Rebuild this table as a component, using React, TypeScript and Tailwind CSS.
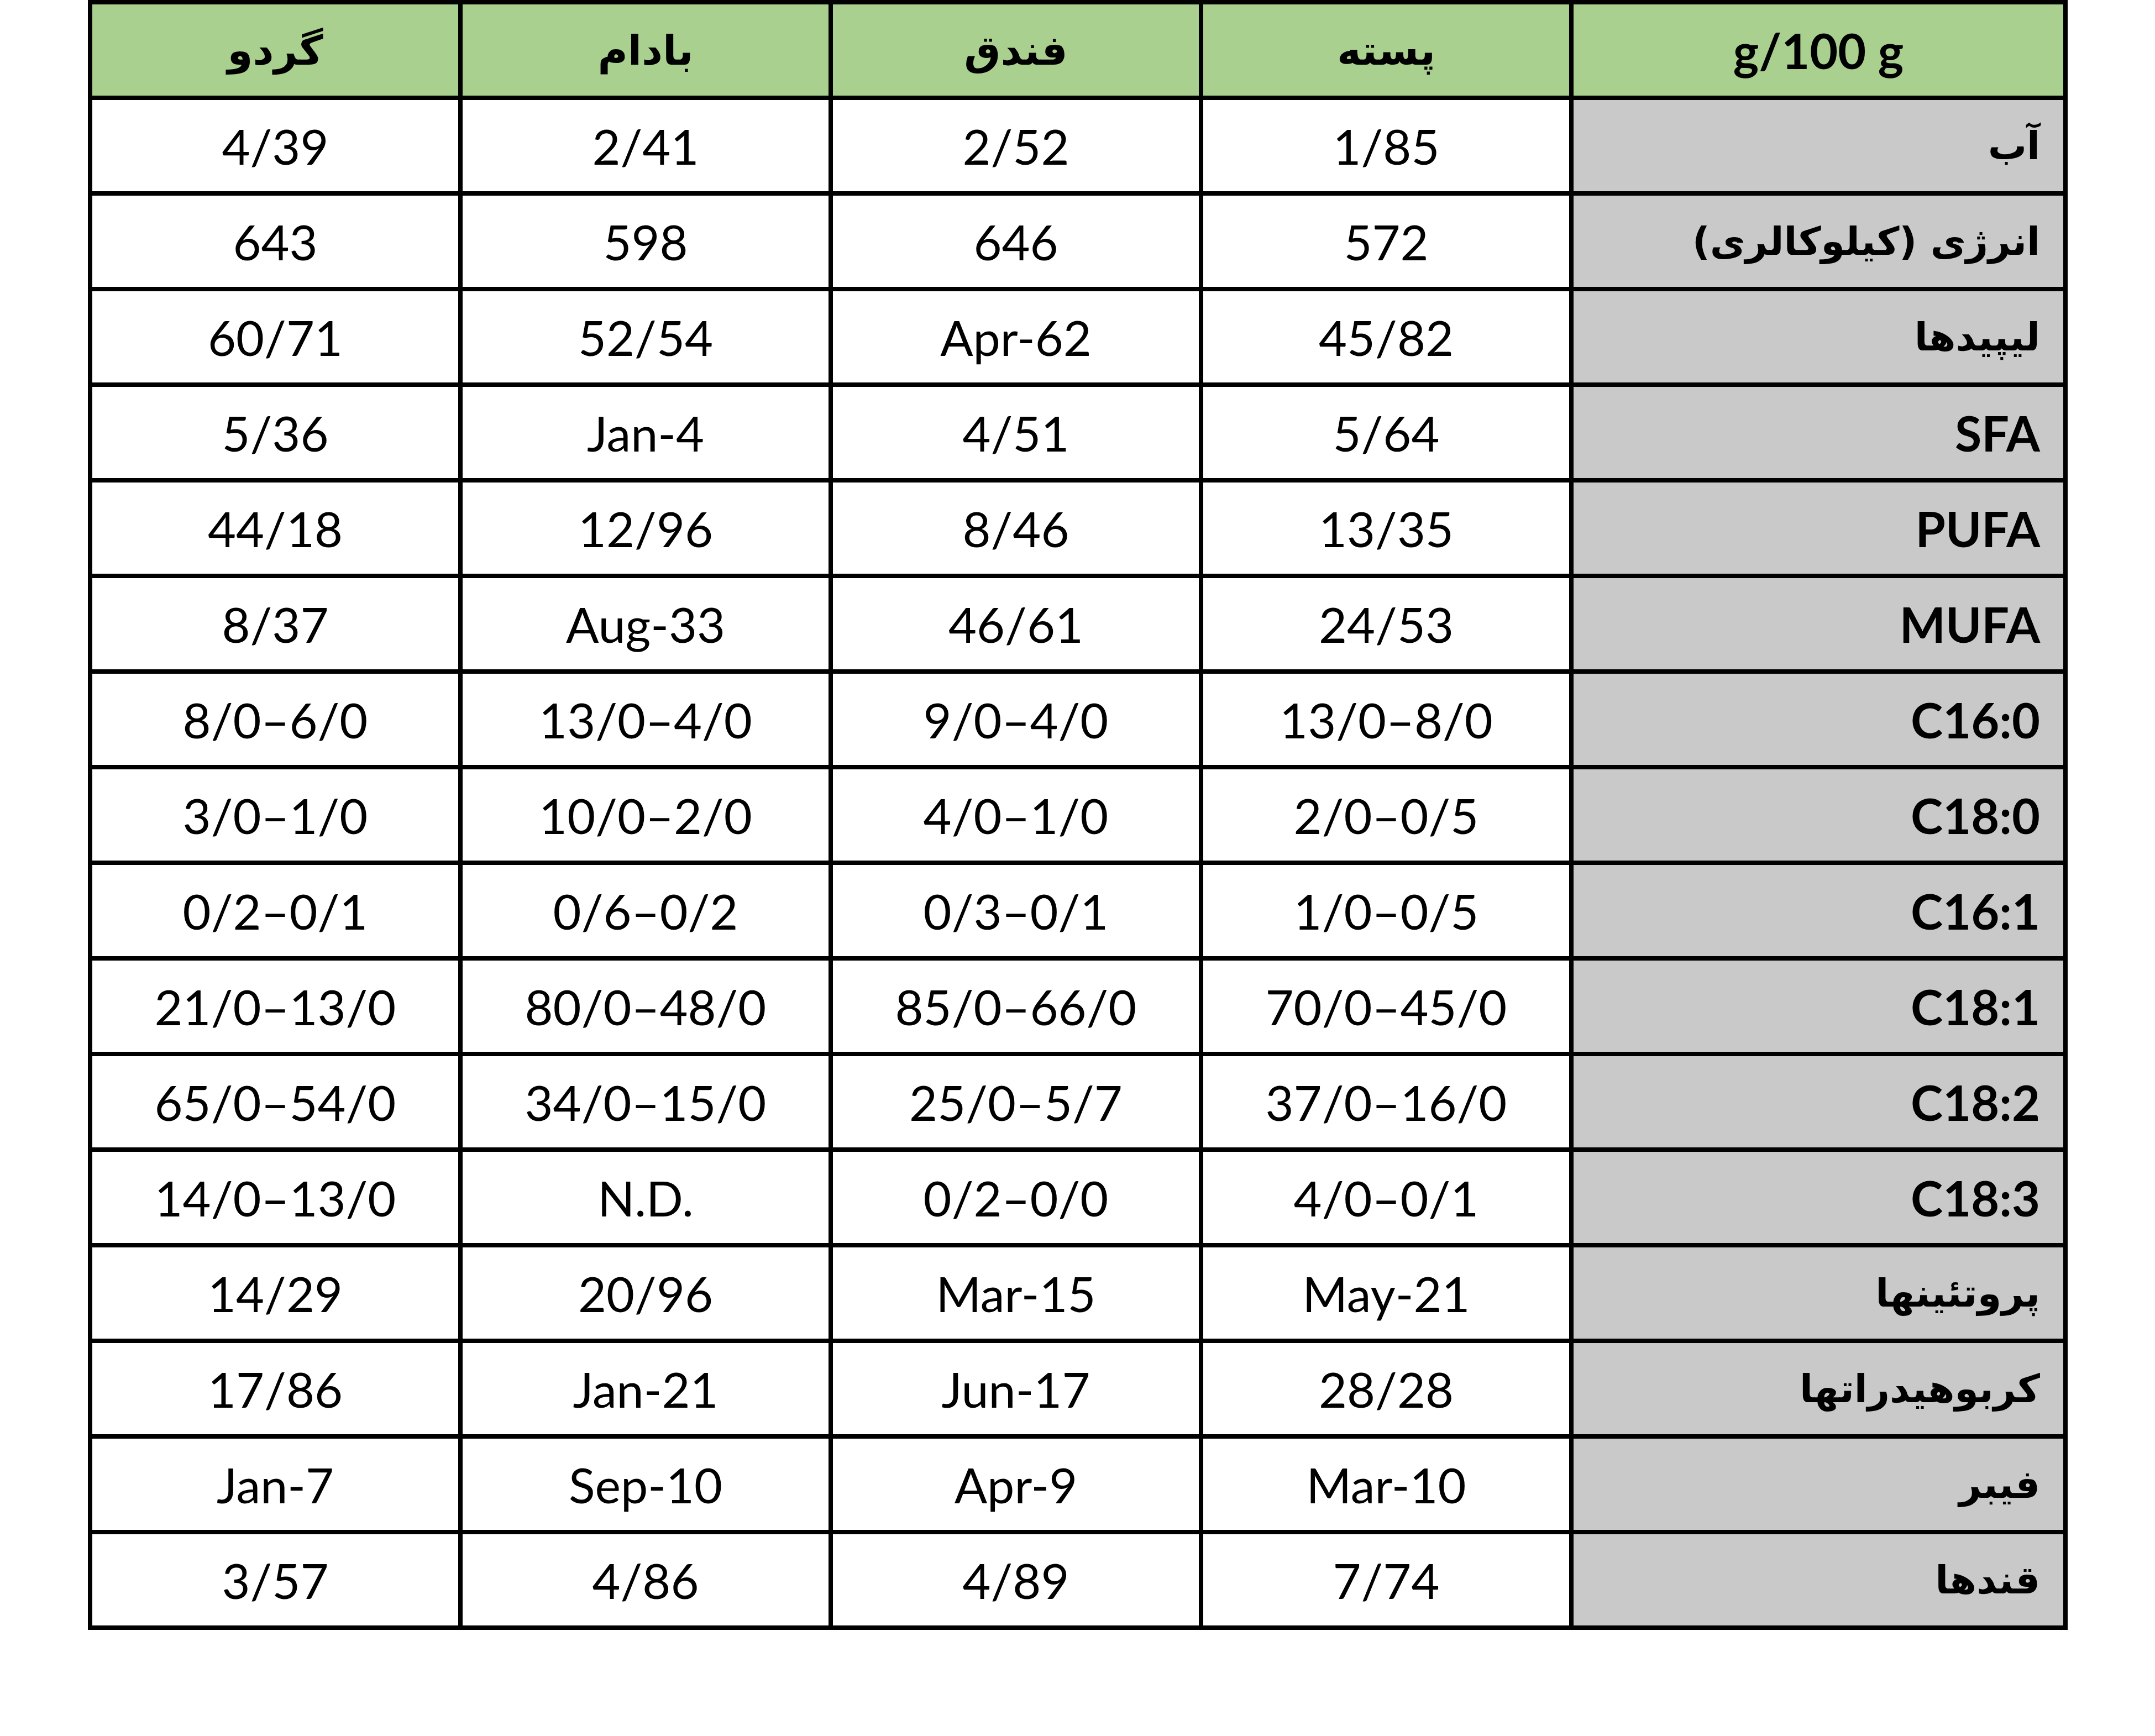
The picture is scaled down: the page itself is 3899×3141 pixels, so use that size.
import React from "react";

const headers = ["گردو", "بادام", "فندق", "پسته"];

const rows: { label: string; fa: boolean; values: string[] }[] = [
  { label: "آب", fa: true, values: ["4/39", "2/41", "2/52", "1/85"] },
  { label: "انرژی (کیلوکالری)", fa: true, values: ["643", "598", "646", "572"] },
  { label: "لیپیدها", fa: true, values: ["60/71", "52/54", "Apr-62", "45/82"] },
  { label: "SFA", fa: false, values: ["5/36", "Jan-4", "4/51", "5/64"] },
  { label: "PUFA", fa: false, values: ["44/18", "12/96", "8/46", "13/35"] },
  { label: "MUFA", fa: false, values: ["8/37", "Aug-33", "46/61", "24/53"] },
  { label: "C16:0", fa: false, values: ["8/0–6/0", "13/0–4/0", "9/0–4/0", "13/0–8/0"] },
  { label: "C18:0", fa: false, values: ["3/0–1/0", "10/0–2/0", "4/0–1/0", "2/0–0/5"] },
  { label: "C16:1", fa: false, values: ["0/2–0/1", "0/6–0/2", "0/3–0/1", "1/0–0/5"] },
  { label: "C18:1", fa: false, values: ["21/0–13/0", "80/0–48/0", "85/0–66/0", "70/0–45/0"] },
  { label: "C18:2", fa: false, values: ["65/0–54/0", "34/0–15/0", "25/0–5/7", "37/0–16/0"] },
  { label: "C18:3", fa: false, values: ["14/0–13/0", "N.D.", "0/2–0/0", "4/0–0/1"] },
  { label: "پروتئینها", fa: true, values: ["14/29", "20/96", "Mar-15", "May-21"] },
  { label: "کربوهیدراتها", fa: true, values: ["17/86", "Jan-21", "Jun-17", "28/28"] },
  { label: "فیبر", fa: true, values: ["Jan-7", "Sep-10", "Apr-9", "Mar-10"] },
  { label: "قندها", fa: true, values: ["3/57", "4/86", "4/89", "7/74"] },
];

const App = () => {
  return (
    <div className="min-h-screen bg-white font-['Lato','DejaVu_Sans',sans-serif] text-black">
      <div className="ml-[159px] w-[3582px] grid grid-cols-[662px_662px_662px_662px_886px] auto-rows-[165px] gap-[8px] bg-black p-[8px]">
        {headers.map((h) => (
          <div
            key={h}
            dir="rtl"
            className="flex items-center justify-center bg-[#a9d08e] text-[74px] font-bold leading-none font-['DejaVu_Sans',sans-serif]"
          >
            {h}
          </div>
        ))}
        <div className="flex items-center justify-center bg-[#a9d08e] text-[88px] font-bold leading-none">
          g/100 g
        </div>
        {rows.map((r) => (
          <React.Fragment key={r.label}>
            {r.values.map((v, i) => (
              <div
                key={i}
                className="flex items-center justify-center bg-white text-[88px] leading-none"
              >
                {v}
              </div>
            ))}
            {r.fa ? (
              <div
                dir="rtl"
                className="flex items-center justify-start bg-[#c9c9c9] pr-[42px] text-[70px] font-bold leading-none font-['DejaVu_Sans',sans-serif]"
              >
                {r.label}
              </div>
            ) : (
              <div className="flex items-center justify-end bg-[#c9c9c9] pr-[42px] text-[88px] font-bold leading-none">
                {r.label}
              </div>
            )}
          </React.Fragment>
        ))}
      </div>
    </div>
  );
};

export default App;
